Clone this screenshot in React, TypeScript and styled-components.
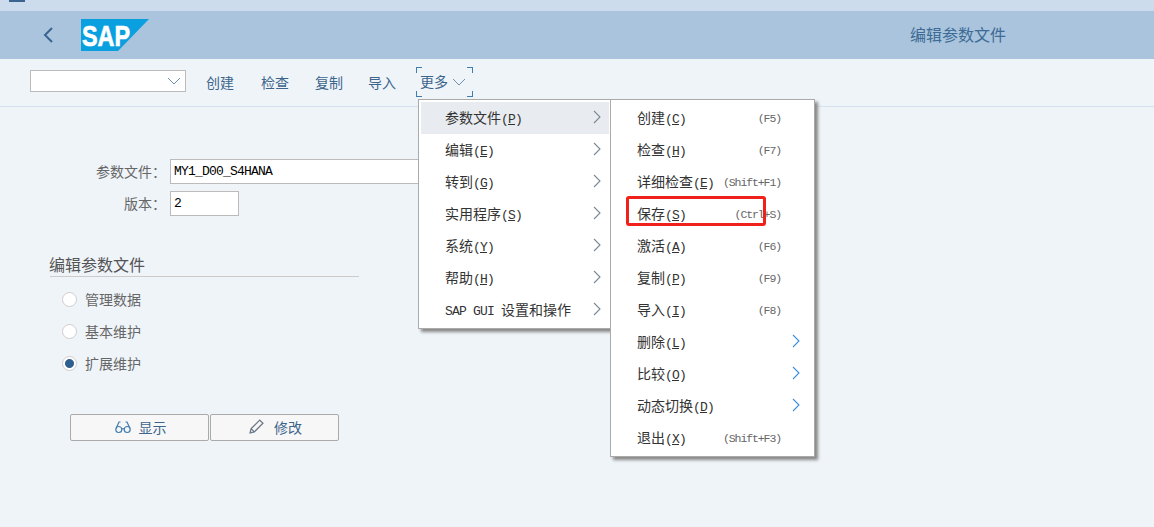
import styled, { createGlobalStyle } from 'styled-components';

const GlobalStyle = createGlobalStyle`
    html, body {
        margin: 0;
        padding: 0;
        background: #eff4f9;
    }
    body {
        font-family: "Noto Sans CJK SC", "Liberation Sans", sans-serif;
        overflow: hidden;
    }
`;

const Page = styled.div`
    position: relative;
    width: 1154px;
    height: 527px;
    overflow: hidden;
`;

const TopStrip = styled.div`
    height: 11px;
    background: #ccdcec;
    padding-left: 9px;
`;

const TabMark = styled.div`
    width: 16px;
    height: 2px;
    background: #3b6590;
`;

const Header = styled.div`
    height: 48px;
    background: #a9c4dc;
    display: flex;
    align-items: center;
    padding-left: 42px;
    padding-right: 148px;
`;

const HeaderTitle = styled.div`
    margin-left: auto;
    margin-top: -2px;
    font-size: 16px;
    color: #3d6b95;
`;

const Toolbar = styled.div`
    height: 47px;
    border-bottom: 1px solid #d5e2ee;
    display: flex;
    align-items: center;
    padding-left: 30px;
`;

const Select = styled.div`
    box-sizing: border-box;
    width: 156px;
    height: 22px;
    margin-top: -4px;
    background: #fff;
    border: 1px solid #bbb;
    display: flex;
    align-items: center;
    justify-content: flex-end;
    padding-right: 4px;
`;

const ToolButton = styled.div`
    font-size: 14px;
    line-height: 20px;
    margin-top: -2px;
    color: #3c658c;
    margin-left: ${(p: { $gap: number }) => p.$gap}px;
`;

const MoreButton = styled.div`
    position: relative;
    box-sizing: border-box;
    width: 57px;
    height: 30px;
    margin-left: 20px;
    margin-top: -1px;
    padding-left: 4px;
    display: flex;
    align-items: center;
    gap: 4px;
    font-size: 14px;
    color: #3c658c;
`;

const MoreText = styled.span`
    margin-top: -2px;
`;

const Corner = styled.span<{ $v: 'top' | 'bottom'; $h: 'left' | 'right' }>`
    position: absolute;
    width: 5px;
    height: 5px;
    ${(p) => p.$v}: 0;
    ${(p) => p.$h}: 0;
    border-${(p) => p.$v}: 1px solid #3f7cb0;
    border-${(p) => p.$h}: 1px solid #3f7cb0;
`;

const Body = styled.div`
    padding: 52px 0 0 50px;
`;

const FormGrid = styled.div`
    display: grid;
    grid-template-columns: 116px 1fr;
    row-gap: 7px;
    width: 368px;
`;

const FieldLabel = styled.div`
    font-size: 14px;
    line-height: 25px;
    color: #666;
    text-align: right;
`;

const FieldInput = styled.div<{ $width: number }>`
    box-sizing: border-box;
    width: ${(p) => p.$width}px;
    height: 25px;
    margin-left: 4px;
    background: #fff;
    border: 1px solid #bbb;
    padding-left: 3px;
    font-family: "Liberation Mono", monospace;
    font-size: 13px;
    letter-spacing: -0.8px;
    line-height: 23px;
    color: #000;
`;

const SectionTitle = styled.div`
    width: 309px;
    margin-top: 38px;
    height: 22px;
    border-bottom: 1px solid #ccc;
    font-size: 16px;
    line-height: 20px;
    color: #555;
    text-indent: -1px;
`;

const RadioList = styled.div`
    margin-top: 6px;
    padding-left: 12px;
`;

const RadioRow = styled.div`
    height: 32px;
    display: flex;
    align-items: center;
    gap: 8px;
    font-size: 14px;
    color: #666;
`;

const RadioDot = styled.span<{ $on?: boolean }>`
    box-sizing: border-box;
    width: 15px;
    height: 15px;
    border-radius: 50%;
    border: 1px solid #d2cccc;
    background: ${(p) => (p.$on
        ? 'radial-gradient(circle, #2f5f90 0, #2f5f90 4px, #fff 5px)'
        : '#fff')};
`;

const ButtonRow = styled.div`
    display: flex;
    gap: 1px;
    margin: 35px 0 0 20px;
`;

const ActionButton = styled.div<{ $width: number; $gap: number }>`
    box-sizing: border-box;
    width: ${(p) => p.$width}px;
    height: 27px;
    padding: 0 0 2px 2px;
    background: #f7f7f7;
    border: 1px solid #aaa;
    border-radius: 2px;
    display: flex;
    align-items: center;
    justify-content: center;
    gap: ${(p) => p.$gap}px;
    font-size: 14px;
    color: #3c658c;
`;

const Menu = styled.div<{ $left: number; $width: number }>`
    position: absolute;
    top: 99px;
    left: ${(p) => p.$left}px;
    width: ${(p) => p.$width}px;
    box-sizing: border-box;
    padding: 2px 1px 2px 2px;
    background: #fff;
    border: 1px solid #aaa;
    box-shadow: 3px 3px 3px #888;
`;

const MenuRow = styled.div<{ $active?: boolean; $pad: number }>`
    box-sizing: border-box;
    height: 32px;
    display: flex;
    align-items: center;
    padding-left: ${(p) => p.$pad}px;
    padding-bottom: 2px;
    background: ${(p) => (p.$active ? '#e8ecf0' : 'transparent')};
    font-size: 14px;
    color: #333;
    white-space: nowrap;
`;

const Mnemonic = styled.span`
    font-family: "Liberation Mono", monospace;
    font-size: 13px;
    letter-spacing: -0.8px;
`;

const Shortcut = styled.span`
    margin-left: auto;
    margin-right: 32px;
    margin-top: 2px;
    font-family: "Liberation Mono", monospace;
    font-size: 11.5px;
    letter-spacing: -1.1px;
    color: #666;
`;

const Chevron = styled.svg`
    margin-left: auto;
    margin-right: 8px;
    width: 8px;
    height: 14px;
    fill: none;
`;

const SubChevron = styled(Chevron)`
    margin-right: 13px;
`;

const RedBox = styled.div`
    position: absolute;
    left: 626px;
    top: 196px;
    width: 140px;
    height: 30px;
    box-sizing: border-box;
    border: 3px solid #f0201a;
    border-radius: 3px;
`;

const BackIcon = () => (
    <svg width="12" height="18" viewBox="0 0 12 18" fill="none">
        <path d="M10 2 L3 9 L10 16" stroke="#3b6590" strokeWidth="2" />
    </svg>
);

const SapLogo = styled.svg`
    margin-left: 27px;
    width: 68px;
    height: 32px;
`;

const Logo = () => (
    <SapLogo viewBox="0 0 68 32">
        <polygon points="0,0 68,0 37,32 0,32" fill="#0a9fdf" />
        <text
            x="1"
            y="27"
            fill="#fff"
            stroke="#fff"
            strokeWidth="0.7"
            fontFamily="Liberation Sans, sans-serif"
            fontWeight="bold"
            fontSize="29"
            textLength="48"
            lengthAdjust="spacingAndGlyphs"
        >
            SAP
        </text>
    </SapLogo>
);

const DownIcon = ({ color }: { color: string }) => (
    <svg width="14" height="8" viewBox="0 0 14 8" fill="none">
        <path d="M1 1 L7 7 L13 1" stroke={color} strokeWidth="1" />
    </svg>
);

const GlassesIcon = () => (
    <svg width="16" height="14" viewBox="0 0 16 14" fill="none" stroke="#3f7cb0" strokeWidth="1.2">
        <circle cx="3.8" cy="9.5" r="3" />
        <circle cx="12.2" cy="9.5" r="3" />
        <path d="M6.8 9 Q8 8 9.2 9 M1 8.5 L4 2 L5.5 2 M15 8.5 L12 2 L10.5 2" />
    </svg>
);

const PencilIcon = () => (
    <svg width="15" height="15" viewBox="0 0 14 14" fill="none" stroke="#6b7a88" strokeWidth="1.2">
        <path d="M1 13 L2 9 L10 1 L13 4 L5 12 Z M2 9 L5 12" />
    </svg>
);

const ArrowRight = ({ sub }: { sub?: boolean }) => {
    const Icon = sub ? SubChevron : Chevron;
    return (
        <Icon viewBox="0 0 8 14">
            <path d="M1 1 L7 7 L1 13" stroke={sub ? '#3d8fdc' : '#7a8894'} strokeWidth="1.1" />
        </Icon>
    );
};

const Label = ({ text, letter }: { text: string; letter: string }) => (
    <span>
        {text}
        <Mnemonic>
            (<u>{letter}</u>)
        </Mnemonic>
    </span>
);

const mainItems = [
    ['参数文件', 'P'],
    ['编辑', 'E'],
    ['转到', 'G'],
    ['实用程序', 'S'],
    ['系统', 'Y'],
    ['帮助', 'H'],
];

const subItems: { text: string; letter: string; key?: string }[] = [
    { text: '创建', letter: 'C', key: '(F5)' },
    { text: '检查', letter: 'H', key: '(F7)' },
    { text: '详细检查', letter: 'E', key: '(Shift+F1)' },
    { text: '保存', letter: 'S', key: '(Ctrl+S)' },
    { text: '激活', letter: 'A', key: '(F6)' },
    { text: '复制', letter: 'P', key: '(F9)' },
    { text: '导入', letter: 'I', key: '(F8)' },
    { text: '删除', letter: 'L' },
    { text: '比较', letter: 'O' },
    { text: '动态切换', letter: 'D' },
    { text: '退出', letter: 'X', key: '(Shift+F3)' },
];

export default function App() {
    return (
        <Page>
            <GlobalStyle />
            <TopStrip>
                <TabMark />
            </TopStrip>
            <Header>
                <BackIcon />
                <Logo />
                <HeaderTitle>编辑参数文件</HeaderTitle>
            </Header>
            <Toolbar>
                <Select>
                    <DownIcon color="#6f8fb5" />
                </Select>
                <ToolButton $gap={20}>创建</ToolButton>
                <ToolButton $gap={27}>检查</ToolButton>
                <ToolButton $gap={26}>复制</ToolButton>
                <ToolButton $gap={25}>导入</ToolButton>
                <MoreButton>
                    <MoreText>更多</MoreText>
                    <DownIcon color="#6f8fb5" />
                    <Corner $v="top" $h="left" />
                    <Corner $v="top" $h="right" />
                    <Corner $v="bottom" $h="left" />
                    <Corner $v="bottom" $h="right" />
                </MoreButton>
            </Toolbar>
            <Body>
                <FormGrid>
                    <FieldLabel>参数文件：</FieldLabel>
                    <FieldInput $width={258}>MY1_D00_S4HANA</FieldInput>
                    <FieldLabel>版本：</FieldLabel>
                    <FieldInput $width={69}>2</FieldInput>
                </FormGrid>
                <SectionTitle>编辑参数文件</SectionTitle>
                <RadioList>
                    <RadioRow><RadioDot />管理数据</RadioRow>
                    <RadioRow><RadioDot />基本维护</RadioRow>
                    <RadioRow><RadioDot $on />扩展维护</RadioRow>
                </RadioList>
                <ButtonRow>
                    <ActionButton $width={139} $gap={8}><GlassesIcon />显示</ActionButton>
                    <ActionButton $width={129} $gap={10}><PencilIcon />修改</ActionButton>
                </ButtonRow>
            </Body>
            <Menu $left={418} $width={193}>
                {mainItems.map(([text, letter], i) => (
                    <MenuRow key={letter} $pad={24} $active={i === 0}>
                        <Label text={text} letter={letter} />
                        <ArrowRight />
                    </MenuRow>
                ))}
                <MenuRow $pad={24}>
                    <span><Mnemonic>SAP GUI </Mnemonic>设置和操作</span>
                    <ArrowRight />
                </MenuRow>
            </Menu>
            <Menu $left={610} $width={205}>
                {subItems.map((item) => (
                    <MenuRow key={item.letter} $pad={24}>
                        <Label text={item.text} letter={item.letter} />
                        {item.key ? <Shortcut>{item.key}</Shortcut> : <ArrowRight sub />}
                    </MenuRow>
                ))}
            </Menu>
            <RedBox />
        </Page>
    );
}
